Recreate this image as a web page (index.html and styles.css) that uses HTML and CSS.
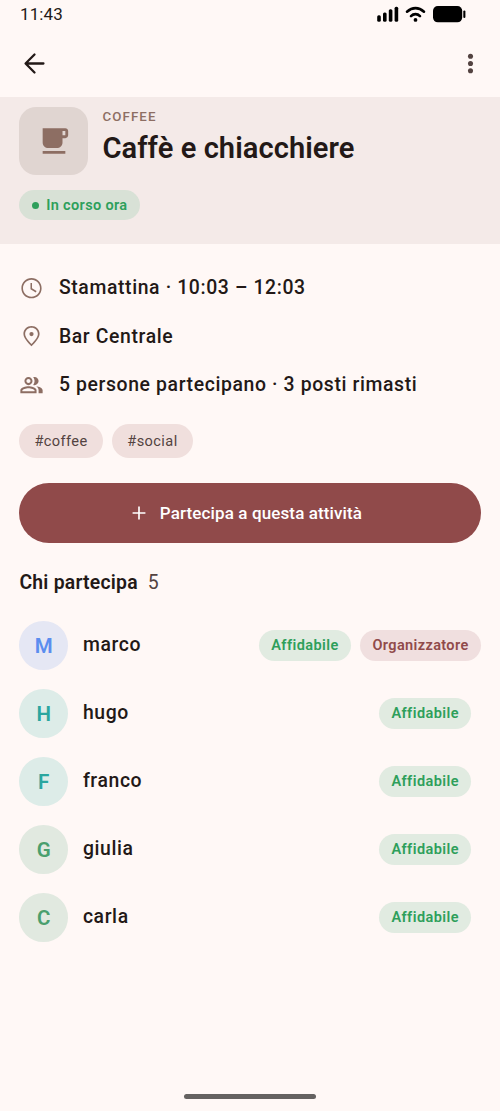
FILE: index.html
```html
<!DOCTYPE html>
<html lang="it">
<head>
<meta charset="utf-8">
<title>Caffè e chiacchiere</title>
<link rel="stylesheet" href="styles.css">
</head>
<body>
<div class="screen">
  <div class="status">
    <span class="clock">11:43</span>
    <svg class="status-icons" viewBox="0 0 90 18" width="90" height="18">
      <rect x="0.2" y="10.2" width="3.6" height="6.6" rx="1.5"/>
      <rect x="6" y="7.5" width="3.6" height="9.3" rx="1.5"/>
      <rect x="11.8" y="4.3" width="3.6" height="12.5" rx="1.5"/>
      <rect x="17.6" y="1.8" width="3.6" height="15" rx="1.5"/>
      <g fill="none" stroke="#000" stroke-width="2.6" stroke-linecap="round">
        <path d="M30 6.7C35.200 1.900 41.800 1.900 47 6.700"/>
        <path d="M34 11.100C36.500 8.500 40.500 8.500 43 11.100"/>
      </g>
      <circle cx="38.500" cy="14.900" r="1.900"/>
      <rect x="56" y="1" width="29.200" height="16.300" rx="4.800"/>
      <rect x="86.300" y="5.500" width="2.100" height="7.400" rx="1"/>
    </svg>
  </div>
  <div class="appbar">
    <svg width="29" height="29" viewBox="0 0 24 24" fill="none" stroke="#231917" stroke-width="1.900" stroke-linecap="round" stroke-linejoin="round"><path d="M19.400 12H4.800M12 4.600L4.600 12L12 19.400"/></svg>
    <svg width="29" height="29" viewBox="0 0 24 24" fill="#534341"><circle cx="12" cy="6" r="2.100"/><circle cx="12" cy="12" r="2.100"/><circle cx="12" cy="18" r="2.100"/></svg>
  </div>
  <header class="hero">
    <div class="hero-top">
      <div class="tile">
        <svg width="34" height="34" viewBox="0 0 24 24" fill="#8d6e63"><path d="M20 3H4v10c0 2.210 1.790 4 4 4h6c2.210 0 4-1.790 4-4v-3h2c1.110 0 2-.9 2-2V5c0-1.110-.89-2-2-2zm0 5h-2V5h2v3zM4 19h16v2H4z"/></svg>
      </div>
      <div class="titles">
        <div class="category">COFFEE</div>
        <h1 class="title">Caffè e chiacchiere</h1>
      </div>
    </div>
    <div class="live"><i class="dot"></i><span>In corso ora</span></div>
  </header>
  <main class="content">
    <div class="info">
      <div class="info-row">
        <svg width="25" height="24.300" viewBox="0 0 24 24" fill="#8d6e63"><path d="M12 2C6.500 2 2 6.500 2 12s4.500 10 10 10 10-4.500 10-10S17.500 2 12 2zm0 18.400c-4.640 0-8.400-3.760-8.400-8.400S7.360 3.600 12 3.600s8.400 3.760 8.400 8.400-3.760 8.400-8.400 8.400z"/><path d="M12.500 7H11v6l5.200 3.200.8-1.300-4.500-2.700z"/></svg>
        <span>Stamattina · 10:03 – 12:03</span>
      </div>
      <div class="info-row">
        <svg width="25" height="24.300" viewBox="0 0 24 24" fill="#8d6e63"><path d="M12 2C7.600 2 4 5.400 4 9.800c0 4.900 8 12.200 8 12.200s8-7.300 8-12.200C20 5.400 16.400 2 12 2zM5.700 9.800c0-3.500 2.800-6.100 6.300-6.100s6.300 2.600 6.300 6.100c0 3.100-3.700 7.500-6.300 9.900-2.500-2.400-6.300-6.800-6.300-9.900z"/><circle cx="12" cy="10" r="2.100"/></svg>
        <span>Bar Centrale</span>
      </div>
      <div class="info-row">
        <svg width="25" height="24.300" viewBox="0 0 24 24" fill="#8d6e63"><path d="M16.670 13.130C18.040 14.060 19 15.320 19 17v3h4v-3c0-2.180-3.570-3.470-6.330-3.870z"/><path d="M15 12c2.210 0 4-1.790 4-4s-1.790-4-4-4c-.47 0-.91.1-1.330.24C14.500 5.270 15 6.580 15 8s-.5 2.730-1.330 3.760c.42.14.86.24 1.330.24z"/><path d="M9 12c2.210 0 4-1.790 4-4s-1.790-4-4-4-4 1.790-4 4 1.790 4 4 4zm0-6c1.100 0 2 .9 2 2s-.9 2-2 2-2-.9-2-2 .9-2 2-2z"/><path d="M9 13c-2.670 0-8 1.340-8 4v3h16v-3c0-2.660-5.330-4-8-4zm6 5H3v-.99C3.200 16.290 6.300 15 9 15s5.800 1.290 6 2v1z"/></svg>
        <span>5 persone partecipano · 3 posti rimasti</span>
      </div>
    </div>
    <div class="tags"><span class="tag">#coffee</span><span class="tag">#social</span></div>
    <button class="join">
      <svg width="22" height="22" viewBox="0 0 24 24" fill="#fff"><path d="M19 12.900h-6.100V19h-1.800v-6.100H5v-1.800h6.100V5h1.800v6.100H19z"/></svg>
      <span>Partecipa a questa attività</span>
    </button>
    <h2 class="section">Chi partecipa <span class="count">5</span></h2>
    <div class="people">
      <div class="person"><span class="avatar blue">M</span><span class="name">marco</span><span class="badge">Affidabile</span><span class="badge organizer">Organizzatore</span></div>
      <div class="person guest"><span class="avatar teal">H</span><span class="name">hugo</span><span class="badge">Affidabile</span></div>
      <div class="person guest"><span class="avatar teal">F</span><span class="name">franco</span><span class="badge">Affidabile</span></div>
      <div class="person guest"><span class="avatar green">G</span><span class="name">giulia</span><span class="badge">Affidabile</span></div>
      <div class="person guest"><span class="avatar green">C</span><span class="name">carla</span><span class="badge">Affidabile</span></div>
    </div>
  </main>
  <div class="home"></div>
</div>
</body>
</html>
```
FILE: styles.css
```css
* { box-sizing: border-box; }
body { margin: 0; background: #fff8f6; color: #231917; font-family: Roboto, sans-serif; }
.screen { height: 1111px; display: flex; flex-direction: column; overflow: hidden; }
.status { height: 29px; flex: none; display: flex; justify-content: space-between; padding: 0 33px 0 20px; }
.clock { font-size: 17px; line-height: 29px; letter-spacing: .1px; }
.status-icons { margin-top: 5px; }
.appbar { height: 68px; flex: none; display: flex; align-items: center; justify-content: space-between; padding: 0 15px 0 20px; }
.hero { height: 147px; flex: none; background: #f4eae8; padding: 10px 19.400px 0; }
.hero-top { display: flex; gap: 14.600px; }
.tile { width: 68.500px; height: 68px; flex: none; border-radius: 17px; background: #e0d5d1; display: flex; align-items: center; justify-content: center; }
.category { font-size: 13.300px; line-height: 18px; margin-top: 1px; font-weight: 500; letter-spacing: 1.100px; color: #8d6e63; }
.title { margin: 3px 0 0; font-size: 29.100px; line-height: 38px; font-weight: 600; letter-spacing: .05px; white-space: nowrap; }
.live { margin-top: 15px; width: 120.500px; height: 30px; border-radius: 15px; background: #d8e1d6; color: #2e9f5b; display: flex; align-items: center; gap: 7.500px; padding-left: 12.300px; font-size: 14.500px; font-weight: 600; letter-spacing: .35px; white-space: nowrap; }
.dot { width: 7px; height: 7px; border-radius: 50%; background: #2e9f5b; }
.content { padding: 19.500px 19.400px 0; }
.info-row { height: 48.600px; display: flex; align-items: center; gap: 14.500px; font-size: 19.400px; font-weight: 500; letter-spacing: .62px; white-space: nowrap; }
.info-row svg { flex: none; }
.tags { display: flex; gap: 9.700px; margin-top: 15px; }
.tag { height: 34px; line-height: 34px; border-radius: 17px; padding: 0 15px; background: #f0dfdd; color: #534341; font-size: 14.600px; letter-spacing: .4px; }
.join { margin-top: 24.500px; width: 100%; height: 60.500px; border: 0; border-radius: 31px; background: #904a4a; color: #fff; font: 500 17px Roboto, sans-serif; letter-spacing: .12px; display: flex; align-items: center; justify-content: center; gap: 10px; padding: 0 13px 0 3px; }
.section { margin: 25.500px 0 0; font-size: 19.400px; line-height: 28px; font-weight: 600; letter-spacing: .22px; }
.count { font-weight: 400; color: #534341; margin-left: 5px; }
.people { margin-top: 14.900px; }
.person { height: 68px; display: flex; align-items: center; }
.guest { padding-right: 9.700px; }
.avatar { width: 48.500px; height: 48.500px; border-radius: 50%; display: flex; align-items: center; justify-content: center; font-size: 20.500px; font-weight: 600; }
.blue { background: #e5e7f4; color: #5b8def; }
.teal { background: #ddece8; color: #2aa69f; }
.green { background: #e1e9e0; color: #4a9f6e; }
.name { margin-left: 15px; flex: 1; font-size: 19.400px; line-height: 24px; margin-bottom: 1px; font-weight: 500; letter-spacing: .6px; }
.badge { height: 30.500px; line-height: 31px; border-radius: 16px; padding: 0 12px; background: #e1ebe1; color: #2e9f5b; font-size: 14.500px; font-weight: 600; letter-spacing: .43px; }
.organizer { margin-left: 9.700px; background: #f0dfdf; color: #904a4a; letter-spacing: .38px; }
.home { width: 132px; height: 5px; border-radius: 3px; background: #656261; margin: auto auto 12px; }
```
